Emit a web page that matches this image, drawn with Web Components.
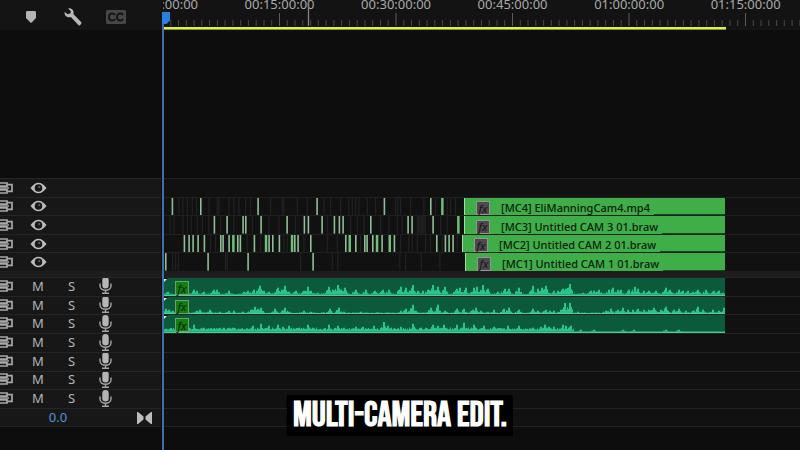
<!DOCTYPE html>
<html lang="en">
<head>
<meta charset="utf-8">
<meta name="viewport" content="width=device-width, initial-scale=1">
<title>Multi-camera timeline</title>
<style>
html, body { margin: 0; height: 100%; background: #0d0d0d; }
body { font-family: "Noto Sans", "Open Sans", sans-serif; font-size: 12px; color: #b9b9b9; }
</style>
</head>
<body>
<editor-timeline></editor-timeline>
<script>
const define = (name, html, setup) => {
  const template = document.createElement('template');
  template.innerHTML = html;
  customElements.define(name, class extends HTMLElement {
    connectedCallback() {
      if (this.shadowRoot) return;
      this.attachShadow({ mode: 'open' }).append(template.content.cloneNode(true));
      if (setup) setup(this, this.shadowRoot);
    }
  });
};
const buttonCss = 'button{appearance:none;border:0;margin:0;padding:0;background:none;color:inherit;font:inherit;display:grid;place-items:center}svg{display:block}';

/* Toolbar over the track headers */
define('timeline-tools', `
<style>
:host{display:flex;align-items:center;padding:4px 0 0 22px;gap:24px;box-sizing:border-box;background:#141414}
${buttonCss}
button{width:18px;height:22px}
</style>
<button aria-label="Add marker"><svg width="10" height="12" viewBox="0 0 10 12"><path d="M0 1.2Q0 0 1.2 0h7.6Q10 0 10 1.2V7L5.7 11.5Q5 12 4.3 11.5L0 7z" fill="#b3b3b3"/></svg></button>
<button aria-label="Timeline settings"><svg width="18" height="18" viewBox="0 0 18 18"><path d="M4.1.4C6.500-.3 9 1.200 9.500 3.600c.2.9.1 1.600-.2 2.400l8 8.200c.9 1-1.600 4-2.700 3L6.800 9C5.200 9.700 3.300 9.300 2 8.200.800 7.200.300 5.500.600 4l3.200 2.200 2.700-.9.400-2z" fill="#b8b8b8"/></svg></button>
<button aria-label="Captions"><svg width="20" height="14" viewBox="0 0 20 14"><rect width="20" height="14" rx="1.500" fill="#474747"/><path d="M9 5.200C8 2.700 3 2.600 3 7s5 4.400 6 1.900M17 5.200c-1-2.500-6-2.600-6 1.800s5 4.400 6 1.900" fill="none" stroke="#151515" stroke-width="2"/></svg></button>
`);

/* Time ruler, 637 units wide with a major tick each 116.5 */
define('time-ruler', `
<style>
:host{display:block;position:relative;overflow:hidden;background:#131313}
.labels{display:flex;margin-left:-9.14%;font-size:13px;line-height:18px;height:12px;margin-top:-5px;color:#a9a9a9}
span{flex:0 0 16.76%;text-align:center;white-space:nowrap}
svg{position:absolute;inset:0;width:100%;height:100%}
</style>
<div class="labels"></div>
<svg viewBox="0 0 637 30" preserveAspectRatio="none" aria-hidden="true"><g></g><path d="M145.500 0V26" stroke="#858585" stroke-width="1.300"/><rect y="27" width="563" height="3" fill="#82963a"/><rect y="27" width="563" height="2" fill="#e0f045"/></svg>
`, (host, root) => {
  root.querySelector('.labels').innerHTML =
    ['00:00:00:00', '00:15:00:00', '00:30:00:00', '00:45:00:00', '01:00:00:00', '01:15:00:00'].map(t => `<span>${t}</span>`).join('');
  let ticks = '';
  for (let i = 1; i < 83; i++) {
    const major = i % 15 === 0;
    ticks += `<path d="M${(i * 116.5 / 15).toFixed(1)} ${major ? 13 : 20}V26" stroke="${major ? '#5c5c5c' : '#484848'}"/>`;
  }
  root.querySelector('g').innerHTML = ticks;
});

const syncIcon = `<button class="sync" aria-label="Toggle sync lock"><svg width="14" height="12" viewBox="0 0 14 12"><path d="M0 1H7V4.200H0M0 7.800H7V11H0M7 2.600H12V9.400H7M0 6H9" fill="none" stroke="#a8a8a8" stroke-width="1.700"/></svg></button>`;
const headCss = `:host{display:grid;grid-template-columns:22px 32px 35px 33px 1fr;grid-template-rows:minmax(0,1fr);align-items:center;box-sizing:border-box;border-top:1px solid #252525;background:#171717;min-height:0;overflow:hidden}${buttonCss}.sync{justify-content:start}`;

define('video-head', `<style>${headCss}</style>${syncIcon}
<button aria-label="Toggle track output"><svg width="17" height="12" viewBox="0 0 17 12"><path d="M.5 6Q8.500-4.500 16.500 6 8.500 16.500.5 6z" fill="#bcbcbc"/><circle cx="8.500" cy="6" r="3.800" fill="#181818"/><circle cx="9.300" cy="5" r="1" fill="#6a6a6a"/></svg></button>`);

define('audio-head', `<style>${headCss}:host{padding-bottom:2px}.letter{font-size:13px;line-height:16px;color:#b5b5b5}</style>${syncIcon}
<button class="letter" aria-label="Mute track">M</button><button class="letter" aria-label="Solo track">S</button>
<button aria-label="Voice-over record"><svg width="13" height="17" viewBox="0 0 13 17"><rect x="3.300" width="6.400" height="11.500" rx="3.200" fill="#b5b5b5"/><path d="M1 6.500v2.200c0 6 11 6 11 0V6.500M6.500 13v3M3 16.200h7" fill="none" stroke="#a5a5a5" stroke-width="1.400"/></svg></button>`);

define('mix-head', `<style>
:host{display:flex;align-items:center;justify-content:space-between;padding:0 9px 0 43px;box-sizing:border-box;border-top:1px solid #252525;border-bottom:1px solid #222;background:#171717}
${buttonCss}
input{width:30px;height:17px;padding:0;border:0;background:none;color:#4f94de;font:13px/17px "Noto Sans",sans-serif;text-align:center}
</style>
<input type="text" value="0.0" aria-label="Mix track volume">
<button aria-label="Keyframe navigation"><svg width="15" height="12" viewBox="0 0 15 12"><path d="M0 0H1L6.500 4.500V7.500L1 12H0zM15 0H14L8.500 4.500V7.500L14 12H15z" fill="#bdbdbd"/></svg></button>`);

/* fx badge */
define('fx-badge', `<style>
:host{display:grid;place-items:center;box-sizing:border-box;width:14px;height:14px;border:1px solid var(--fx-edge,#8f9a8f);background:var(--fx-fill,#51484f);color:#101510;font:italic 11px/11px "Noto Sans",sans-serif}
</style><span>fx</span>`);

/* Multicam lane: edit slices, then the named uncut clip */
define('video-lane', `<style>
:host{display:grid;grid-template-columns:301fr 261fr 75fr;grid-template-rows:minmax(0,1fr);border-top:1px solid #1f1f1f;background:#111;min-height:0;box-sizing:border-box}
svg{display:block;width:100%;height:100%;min-width:0;min-height:0}
.clip{display:flex;min-width:0;min-height:0;box-sizing:border-box;border-left:1px solid #a2dca3;background:#3fae49;color:#0b1c0d}
.name{display:flex;align-items:center;gap:11px;padding:2px 4px 0 11px;height:19px;font:500 11px/16px "Noto Sans",sans-serif;box-sizing:border-box;background:#3fae49;white-space:nowrap}
.rest{flex:1;border-bottom:1px solid #144a1d}
:host(:not([name])) .clip{visibility:hidden}
</style><svg preserveAspectRatio="none" aria-hidden="true"></svg><div class="clip"><div class="name"><fx-badge></fx-badge><span></span></div><div class="rest"></div></div>`, (host, root) => {
  const start = Number(host.getAttribute('start') || 301);
  host.style.gridTemplateColumns = `minmax(0,${start}fr) minmax(0,${562 - start}fr) minmax(0,75fr)`;
  const list = key => (host.getAttribute(key) || '').split(',').filter(Boolean);
  const x = z => parseInt(z) / 3 - 3;
  const svg = root.querySelector('svg');
  svg.setAttribute('viewBox', `0 0 ${start} 18`);
  svg.innerHTML =
    list('dim').map(z => `<rect x="${x(z).toFixed(1)}" width="1.200" height="18" fill="#222"/>`).join('') +
    list('cuts').map(z => z.endsWith('w')
      ? `<rect x="${(x(z) - 1.2).toFixed(1)}" width="2.500" height="18" fill="#6cc177"/>`
      : `<rect x="${(x(z) - .7).toFixed(1)}" width="1.600" height="18" fill="#8fbd95"/>`).join('');
  root.querySelector('.name span').textContent = host.getAttribute('name') || '';
});

/* Audio lane: waveform built from listed peaks over a noise floor */
define('audio-lane', `<style>
:host{display:grid;grid-template-columns:562fr 75fr;border-top:1px solid #242424;background:#111;min-height:0;box-sizing:border-box}
.clip{position:relative;min-height:0;background:#0b5a3c;border-bottom:1px solid #55ca98;box-sizing:border-box}
svg{position:absolute;inset:0;width:100%;height:100%}
fx-badge{position:absolute;left:12px;top:3px;--fx-edge:#67a36b;--fx-fill:#12800f}
:host(:not([peaks])) .clip{visibility:hidden}
</style><div class="clip"><svg viewBox="0 0 562 17" preserveAspectRatio="none" aria-hidden="true"></svg><fx-badge></fx-badge></div>`, (host, root) => {
  if (!host.hasAttribute('peaks')) { root.querySelector('.clip').replaceChildren(); return; }
  const floor = Number(host.getAttribute('floor') || 1);
  const floorEnd = Number(host.getAttribute('floor-end') || 562);
  let seed = 7 + floor;
  const random = () => (seed = (seed * 16807) % 2147483647) / 2147483647;
  const heights = Array.from({ length: 562 }, (_, i) => i < floorEnd ? floor * (.6 + random() * .8) : .5);
  host.getAttribute('peaks').split(',').forEach(pair => {
    const [z, h] = pair.split(':').map(Number);
    const c = Math.round(z / 3 - 3);
    for (let k = -3; k <= 3; k++) {
      if (c + k < 0 || c + k > 561) continue;
      const v = k === 0 || k === 1 ? h : h * (.8 - Math.abs(k) * .13) * (.5 + random() * .7);
      heights[c + k] = Math.max(heights[c + k], v);
    }
  });
  const d = heights.map((h, i) => `L${i} ${(17 - h).toFixed(1)}H${i + 1}`).join('');
  root.querySelector('svg').innerHTML = `<path d="M0 17${d}V17z" fill="#28c58a"/><path d="M0 0H5L0 5z" fill="#101010"/><path d="M1 1H4L1 4z" fill="#e8eee8"/>`;
});

define('caption-card', `<style>
:host{display:block;padding:0 6px;background:#000;color:#fff;font:bold 35px/41px "Bebas Neue","Liberation Sans Narrow","Roboto Condensed","Liberation Sans",sans-serif;white-space:nowrap;text-align:center}
</style><slot></slot>`);

define('play-head', `<style>
:host{display:block;width:8px}
svg{display:block}
.line{width:2px;height:calc(100% - 12px);background:#3f6ea8}
</style><svg width="8" height="12" viewBox="0 0 8 12"><path d="M0 0H8V8.500L4.500 12H0z" fill="#2a80dd"/></svg><div class="line"></div>`);

const a1 = '22:3,30:1,100:5,108:4,130:3,160:5,167:5,205:4,250:3,262:4,280:5,297:9,310:4,325:3,352:7,362:5,373:9,385:3,405:4,430:4,440:8,450:4,470:2,505:8,517:5,530:10,540:5,552:7,585:5,614:5,642:4,666:5,685:5,720:8,735:7,755:10,770:4,785:4,800:5,815:10,832:8,852:8,888:6,898:7,915:7,938:7,948:8,965:10,982:6,1010:3,1032:6,1045:6,1073:7,1115:9,1130:6,1143:7,1155:9,1180:4,1190:4,1205:6,1215:6,1228:11,1265:2,1290:4,1300:4,1315:5,1345:5,1355:7,1370:5,1380:5,1405:5,1422:8,1430:6,1450:4,1465:4,1485:4,1515:7,1528:5,1555:5,1565:4,1580:4,1595:3,1610:5,1635:5,1660:4,1675:4,1685:2';
const a2 = '15:5,25:4,35:3,108:3,118:4,148:4,178:2,205:3,220:3,245:2,270:4,283:7,292:5,300:6,342:5,372:6,385:2,430:3,450:2,508:5,533:6,550:2,600:2,660:1,720:3,735:5,755:9,765:3,810:6,830:9,852:3,888:5,910:5,935:4,945:6,960:3,980:2,1000:4,1030:5,1045:6,1073:4,1115:5,1130:3,1155:4,1168:3,1180:3,1200:4,1212:11,1228:11,1250:2,1335:3,1350:5,1370:4,1385:6,1400:4,1415:4,1430:5,1450:4,1465:4,1480:6,1500:4,1515:7,1540:4,1555:5,1575:3,1595:3,1610:7,1625:4,1655:4,1675:3,1690:6';
const a3 = '100:7,130:4,190:4,215:4,275:6,300:8,325:6,350:7,365:5,385:6,440:7,455:4,505:7,530:6,550:4,585:5,605:5,640:6,668:10,680:6,720:5,755:8,780:4,815:7,832:6,850:7,888:7,910:9,940:7,970:6,1000:5,1040:6,1075:6,1115:4,1140:5,1152:7,1165:5,1180:5,1205:7,1215:6,1230:6,1260:2,1300:2,1385:2,1420:2,1515:2,1555:2';

define('editor-timeline', `<style>
:host{display:grid;position:relative;grid-template-columns:163px 1fr;grid-template-rows:30px 148px 93px 6px 131px 19px 1fr;min-height:100vh;overflow:hidden;background:#0d0d0d}
.tracks{display:grid;grid-auto-rows:1fr;min-height:0;min-width:0}
.heads{margin-right:2px}
.gap{grid-column:1/-1}
.split{background:#1e1c1d}
mix-head{margin-right:2px}
.mix-lane{border-top:1px solid #242424;border-bottom:1px solid #222;background:#111}
play-head{position:absolute;left:162px;top:12px;bottom:0}
caption-card{position:absolute;left:50%;bottom:14px;transform:translateX(-50%)}
</style>
<timeline-tools></timeline-tools><time-ruler></time-ruler>
<div class="gap"></div>
<div class="tracks heads">${'<video-head></video-head>'.repeat(5)}</div>
<div class="tracks">
<video-lane></video-lane>
<video-lane start="301" name="[MC4] EliManningCam4.mp4" cuts="37,122,294,471,673,812,847w" dim="55,67,80,95,108,145,170,175,205,220,235,255,270,330,365,370,410,440,490,510,540,565,575,585,595,620,645,705,712,720,750,790,825,860,870,885"></video-lane>
<video-lane start="301" name="[MC3] Untitled CAM 3 01.braw" cuts="163,201,249,257,303,381,433,445,486,523,538,549,632,744,756,819,895w" dim="28,40,67,80,92,110,125,145,180,220,275,325,355,405,500,570,590,610,660,685,710,725,770,774,778,782,786,790,794,840,860"></video-lane>
<video-lane start="299" name="[MC2] Untitled CAM 2 01.braw" cuts="73,87,99,114,133,182,189,207,220w,233,241,283,318w,327,338,358,396w,404,414,452,557,569w,587,614,621,638,651w,666,689w,703,830,856,867,879" dim="150,165,260,300,370,380,430,500,530,600,720,745,755,770,795,810,845,890"></video-lane>
<video-lane start="302" name="[MC1] Untitled CAM 1 01.braw" cuts="17,144,264,459" dim="36,45,53,195,200,420,515,532,718,735,782,838"></video-lane>
</div>
<div class="gap split"></div>
<div class="tracks heads">${'<audio-head></audio-head>'.repeat(7)}</div>
<div class="tracks">
<audio-lane peaks="${a1}"></audio-lane>
<audio-lane peaks="${a2}"></audio-lane>
<audio-lane floor="3" floor-end="408" peaks="${a3}"></audio-lane>
${'<audio-lane></audio-lane>'.repeat(4)}
</div>
<mix-head></mix-head><div class="mix-lane"></div>
<play-head></play-head>
<caption-card>MULTI-CAMERA EDIT.</caption-card>`);
</script>
</body>
</html>
